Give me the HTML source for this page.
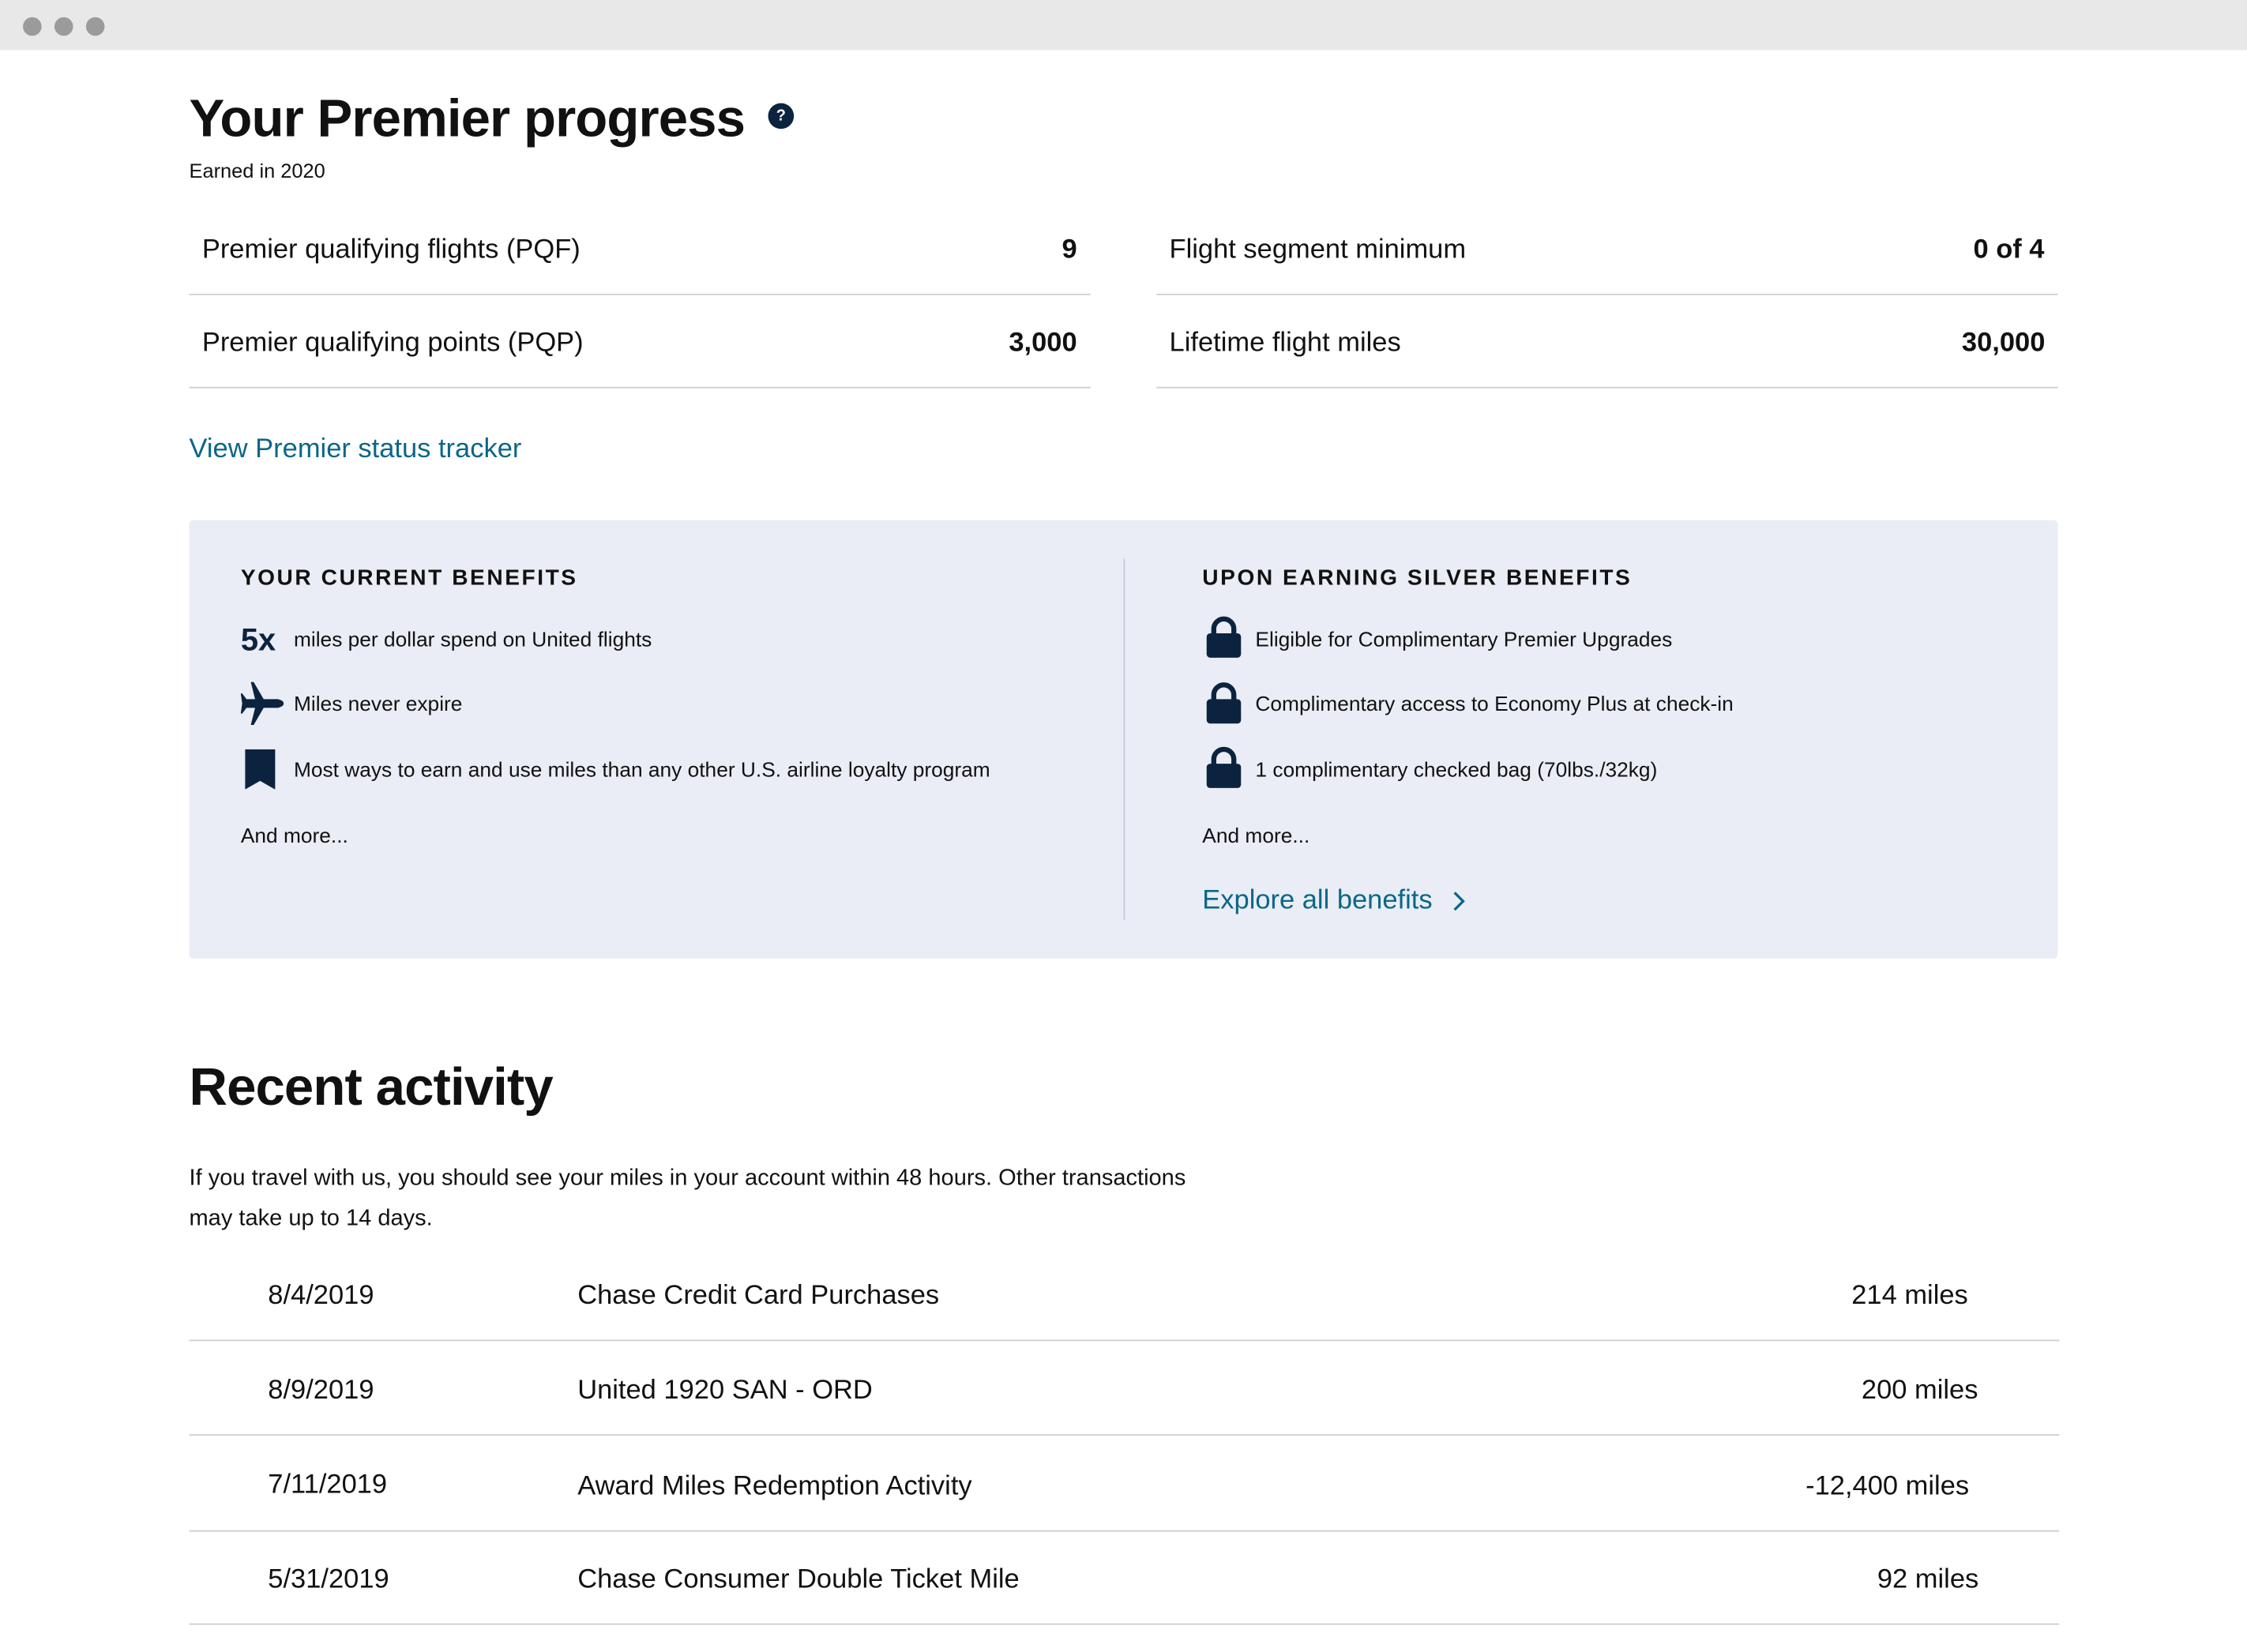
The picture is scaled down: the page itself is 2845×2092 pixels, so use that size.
<!DOCTYPE html>
<html><head><meta charset="utf-8"><style>
html,body{margin:0;padding:0;background:#fff;width:2845px;height:2091px;overflow:hidden}
#w{position:absolute;left:0;top:0;width:1568px;height:1153px;transform:scale(1.81441);transform-origin:0 0;font-family:"Liberation Sans",sans-serif;color:#111}
.a{position:absolute;white-space:nowrap}
.bar{position:absolute;left:0;top:0;width:1568px;height:35px;background:#e8e8e8}
.dot{position:absolute;top:12px;width:13px;height:13px;border-radius:50%;background:#9b9b9b}
.ln{position:absolute;height:1px;background:#cfcfcf}
.r{font-size:19px;line-height:24px;margin-top:2px}
.b{font-weight:bold}
.h{font-size:15.5px;font-weight:bold;letter-spacing:1.4px;line-height:20px;margin-top:2px}
.t{font-size:14.5px;line-height:20px;margin-top:1px}
.lk{color:#0b6688}
</style></head><body><div id="w">
<div class="bar"></div><div class="dot" style="left:16px"></div><div class="dot" style="left:38px"></div><div class="dot" style="left:60px"></div>

<div class="a" style="left:132px;top:60px;font-size:37px;font-weight:bold;line-height:46px;letter-spacing:-0.5px">Your Premier progress</div>
<div class="a" style="left:536px;top:72px;width:18px;height:18px;border-radius:50%;background:#0c2340;color:#fff;font-size:11px;font-weight:bold;text-align:center;line-height:18px">?</div>
<div class="a" style="left:132px;top:110px;font-size:14px;line-height:18px">Earned in 2020</div>

<div class="a r" style="left:141px;top:161px">Premier qualifying flights (PQF)</div>
<div class="a r b" style="left:741px;top:161px">9</div>
<div class="ln" style="left:132px;top:205px;width:629px"></div>
<div class="a r" style="left:141px;top:226px">Premier qualifying points (PQP)</div>
<div class="a r b" style="left:704px;top:226px">3,000</div>
<div class="ln" style="left:132px;top:270px;width:629px"></div>

<div class="a r" style="left:816px;top:161px">Flight segment minimum</div>
<div class="a r b" style="left:1377px;top:161px">0 of 4</div>
<div class="ln" style="left:807px;top:205px;width:629px"></div>
<div class="a r" style="left:816px;top:226px">Lifetime flight miles</div>
<div class="a r b" style="left:1369px;top:226px">30,000</div>
<div class="ln" style="left:807px;top:270px;width:629px"></div>

<div class="a r lk" style="left:132px;top:300px">View Premier status tracker</div>

<div class="a" style="left:132px;top:363px;width:1304px;height:306px;background:#eaedf5;border-radius:3px"></div>
<div class="a" style="left:784px;top:390px;width:1px;height:252px;background:#c8ccd6"></div>

<div class="a h" style="left:168px;top:392px">YOUR CURRENT BENEFITS</div>
<div class="a" style="left:168px;top:433px;font-size:22px;font-weight:bold;color:#0c2340;line-height:28px">5x</div>
<div class="a t" style="left:205px;top:436px">miles per dollar spend on United flights</div>
<svg class="a" style="left:168px;top:476px" width="30" height="30" viewBox="0 0 30 30"><path fill="#0c2340" d="M7 0 L9 0 L16 12 L26 12 Q30 13 30 15 Q30 17 26 18 L16 18 L9 30 L7 30 L10 18 L4 18 L1 22 L0 22 L1 15 L0 8 L1 8 L4 12 L10 12 Z"/></svg>
<div class="a t" style="left:205px;top:481px">Miles never expire</div>
<svg class="a" style="left:171px;top:523px" width="24" height="28"><path fill="#0c2340" d="M0 0H21V28L10.5 22L0 28Z"/></svg>
<div class="a t" style="left:205px;top:527px">Most ways to earn and use miles than any other U.S. airline loyalty program</div>
<div class="a t" style="left:168px;top:573px">And more...</div>

<div class="a h" style="left:839px;top:392px">UPON EARNING SILVER BENEFITS</div>
<svg class="a" style="left:841px;top:430px" width="26" height="30"><path d="M6 13V9a7 7 0 0 1 14 0v4" fill="none" stroke="#0c2340" stroke-width="3.5"/><rect x="1" y="12" width="24" height="17" rx="2.5" fill="#0c2340"/></svg>
<div class="a t" style="left:876px;top:436px">Eligible for Complimentary Premier Upgrades</div>
<svg class="a" style="left:841px;top:476px" width="26" height="30"><path d="M6 13V9a7 7 0 0 1 14 0v4" fill="none" stroke="#0c2340" stroke-width="3.5"/><rect x="1" y="12" width="24" height="17" rx="2.5" fill="#0c2340"/></svg>
<div class="a t" style="left:876px;top:481px">Complimentary access to Economy Plus at check-in</div>
<svg class="a" style="left:841px;top:521px" width="26" height="30"><path d="M6 13V9a7 7 0 0 1 14 0v4" fill="none" stroke="#0c2340" stroke-width="3.5"/><rect x="1" y="12" width="24" height="17" rx="2.5" fill="#0c2340"/></svg>
<div class="a t" style="left:876px;top:527px">1 complimentary checked bag (70lbs./32kg)</div>
<div class="a t" style="left:839px;top:573px">And more...</div>
<div class="a r lk" style="left:839px;top:615px">Explore all benefits</div>
<svg class="a" style="left:1012px;top:620px" width="12" height="18"><path d="M3 3L9 9L3 15" fill="none" stroke="#0b6688" stroke-width="1.8"/></svg>

<div class="a" style="left:132px;top:736px;font-size:37px;font-weight:bold;line-height:46px;letter-spacing:-0.5px">Recent activity</div>
<div class="a" style="left:132px;top:809px;font-size:16px;line-height:28px;white-space:normal;width:720px">If you travel with us, you should see your miles in your account within 48 hours. Other transactions may take up to 14 days.</div>

<div class="a r" style="left:187px;top:891px">8/4/2019</div><div class="a r" style="left:403px;top:891px">Chase Credit Card Purchases</div><div class="a r" style="left:1292px;top:891px">214 miles</div>
<div class="ln" style="left:132px;top:935px;width:1305px"></div>
<div class="a r" style="left:187px;top:957px">8/9/2019</div><div class="a r" style="left:403px;top:957px">United 1920 SAN - ORD</div><div class="a r" style="left:1299px;top:957px">200 miles</div>
<div class="ln" style="left:132px;top:1001px;width:1305px"></div>
<div class="a r" style="left:187px;top:1023px">7/11/2019</div><div class="a r" style="left:403px;top:1024px">Award Miles Redemption Activity</div><div class="a r" style="left:1260px;top:1024px">-12,400 miles</div>
<div class="ln" style="left:132px;top:1068px;width:1305px"></div>
<div class="a r" style="left:187px;top:1089px">5/31/2019</div><div class="a r" style="left:403px;top:1089px">Chase Consumer Double Ticket Mile</div><div class="a r" style="left:1310px;top:1089px">92 miles</div>
<div class="ln" style="left:132px;top:1133px;width:1305px"></div>
</div></body></html>
